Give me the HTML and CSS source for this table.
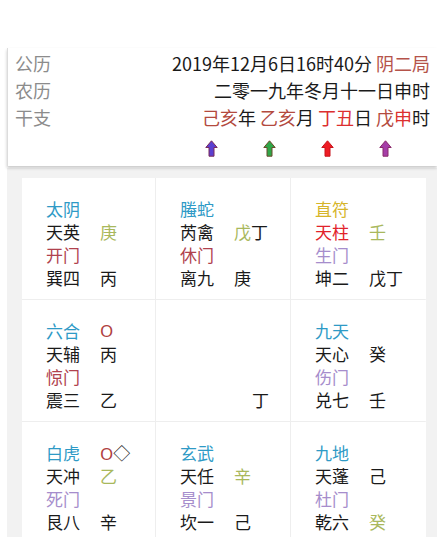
FILE: index.html
```html
<!DOCTYPE html>
<html lang="zh">
<head>
<meta charset="utf-8">
<link rel="stylesheet" href="styles.css">
</head>
<body>
<div class="page">
  <div class="header">
    <div class="hrow"><span class="label">公历</span><span class="val">2019年12月6日16时40分 <span class="ju">阴二局</span></span></div>
    <div class="hrow"><span class="label">农历</span><span class="val">二零一九年冬月十一日申时</span></div>
    <div class="hrow"><span class="label">干支</span>
      <span class="gz">
        <span class="grp"><span class="br">己亥</span>年</span>
        <span class="grp"><span class="br">乙亥</span>月</span>
        <span class="grp"><span class="rd">丁丑</span>日</span>
        <span class="grp"><span class="br">戊</span><span class="rd">申</span>时</span>
      </span>
    </div>
    <div class="arrows">
      <span class="arr"><svg width="13" height="17" viewBox="0 0 13 17"><path d="M6.5 0.8 L12.2 7.5 L9 7.5 L9 16.2 L4 16.2 L4 7.5 L0.8 7.5 Z" fill="#5b3fd0" stroke="#7a2a5a" stroke-width="1"/></svg></span>
      <span class="arr"><svg width="13" height="17" viewBox="0 0 13 17"><path d="M6.5 0.8 L12.2 7.5 L9 7.5 L9 16.2 L4 16.2 L4 7.5 L0.8 7.5 Z" fill="#2fa648" stroke="#6a4a2a" stroke-width="1"/></svg></span>
      <span class="arr"><svg width="13" height="17" viewBox="0 0 13 17"><path d="M6.5 0.8 L12.2 7.5 L9 7.5 L9 16.2 L4 16.2 L4 7.5 L0.8 7.5 Z" fill="#ee1c24" stroke="#c8141c" stroke-width="1"/></svg></span>
      <span class="arr"><svg width="13" height="17" viewBox="0 0 13 17"><path d="M6.5 0.8 L12.2 7.5 L9 7.5 L9 16.2 L4 16.2 L4 7.5 L0.8 7.5 Z" fill="#a53ea8" stroke="#8a2a6a" stroke-width="1"/></svg></span>
    </div>
  </div>

  <div class="board">
    <div class="grid">
      <div class="cell">
        <span class="god">太阴</span><span></span>
        <span>天英</span><span class="ol">庚</span>
        <span class="door">开门</span><span></span>
        <span>巽四</span><span>丙</span>
      </div>
      <div class="cell">
        <span class="god">螣蛇</span><span></span>
        <span>芮禽</span><span><span class="ol">戊</span>丁</span>
        <span class="door">休门</span><span></span>
        <span>离九</span><span>庚</span>
      </div>
      <div class="cell">
        <span class="fu">直符</span><span></span>
        <span class="star-red">天柱</span><span class="ol">壬</span>
        <span class="door2">生门</span><span></span>
        <span>坤二</span><span>戊丁</span>
      </div>

      <div class="cell">
        <span class="god">六合</span><span class="ko">O</span>
        <span>天辅</span><span>丙</span>
        <span class="door">惊门</span><span></span>
        <span>震三</span><span>乙</span>
      </div>
      <div class="cell">
        <span></span><span></span>
        <span></span><span></span>
        <span></span><span></span>
        <span></span><span class="shift">丁</span>
      </div>
      <div class="cell">
        <span class="god">九天</span><span></span>
        <span>天心</span><span>癸</span>
        <span class="door2">伤门</span><span></span>
        <span>兑七</span><span>壬</span>
      </div>

      <div class="cell">
        <span class="god">白虎</span><span><span class="ko">O</span>◇</span>
        <span>天冲</span><span class="ol">乙</span>
        <span class="door2">死门</span><span></span>
        <span>艮八</span><span>辛</span>
      </div>
      <div class="cell">
        <span class="god">玄武</span><span></span>
        <span>天任</span><span class="ol">辛</span>
        <span class="door2">景门</span><span></span>
        <span>坎一</span><span>己</span>
      </div>
      <div class="cell">
        <span class="god">九地</span><span></span>
        <span>天蓬</span><span>己</span>
        <span class="door2">杜门</span><span></span>
        <span>乾六</span><span class="ol">癸</span>
      </div>
    </div>
  </div>
</div>
</body>
</html>
```

FILE: styles.css
```css
html, body {
  margin: 0;
  padding: 0;
  background: #ffffff;
  overflow: hidden;
}
body {
  font-family: "Noto Sans CJK SC", "Noto Sans", sans-serif;
  color: #1a1a1a;
  height: 537px;
}
.page {
  padding: 48px 0 0 7px;
  width: 430px;
}
.header {
  background: #ffffff;
  border-left: 1px solid #dcdcdc;
  box-shadow: 0 2px 3px rgba(0, 0, 0, 0.22);
  padding: 2px 7px 0 7px;
  height: 116px;
  position: relative;
  z-index: 1;
}
.hrow {
  display: flex;
  justify-content: space-between;
  align-items: center;
  height: 27px;
  font-size: 18px;
  line-height: 27px;
}
.label {
  color: #8c8c8c;
}
.val {
  color: #1a1a1a;
}
.ju {
  color: #b5534a;
}
.gz {
  display: flex;
  gap: 4px;
}
.grp {
  width: 54px;
  white-space: nowrap;
}
.br {
  color: #b34a3e;
}
.rd {
  color: #dc2f2f;
}
.arrows {
  display: flex;
  justify-content: flex-end;
  gap: 4px;
  padding-top: 9px;
}
.arr {
  width: 54px;
  display: flex;
}
.arr svg {
  display: block;
  margin-left: 3px;
}
.board {
  background: #f2f2f2;
  margin-top: 2px;
  padding: 10px 12px 0 15px;
  height: 359px;
  overflow: hidden;
}
.grid {
  display: grid;
  grid-template-columns: 133px 134px 135px;
  grid-auto-rows: 121px;
  gap: 1px;
  background: #eeeeee;
}
.cell {
  background: #ffffff;
  padding: 19px 0 0 24px;
  display: grid;
  grid-template-columns: 54px auto;
  grid-auto-rows: 23px;
  font-size: 17px;
  line-height: 23px;
  align-content: start;
}
.god {
  color: #2e9ac6;
}
.fu {
  color: #d6b52a;
}
.star-red {
  color: #e2222a;
}
.door {
  color: #b0424e;
}
.door2 {
  color: #a68dcc;
}
.ol {
  color: #a9b85c;
}
.ko {
  color: #b04040;
  font-family: "Noto Sans", sans-serif;
}
.shift {
  padding-left: 18px;
}
```
